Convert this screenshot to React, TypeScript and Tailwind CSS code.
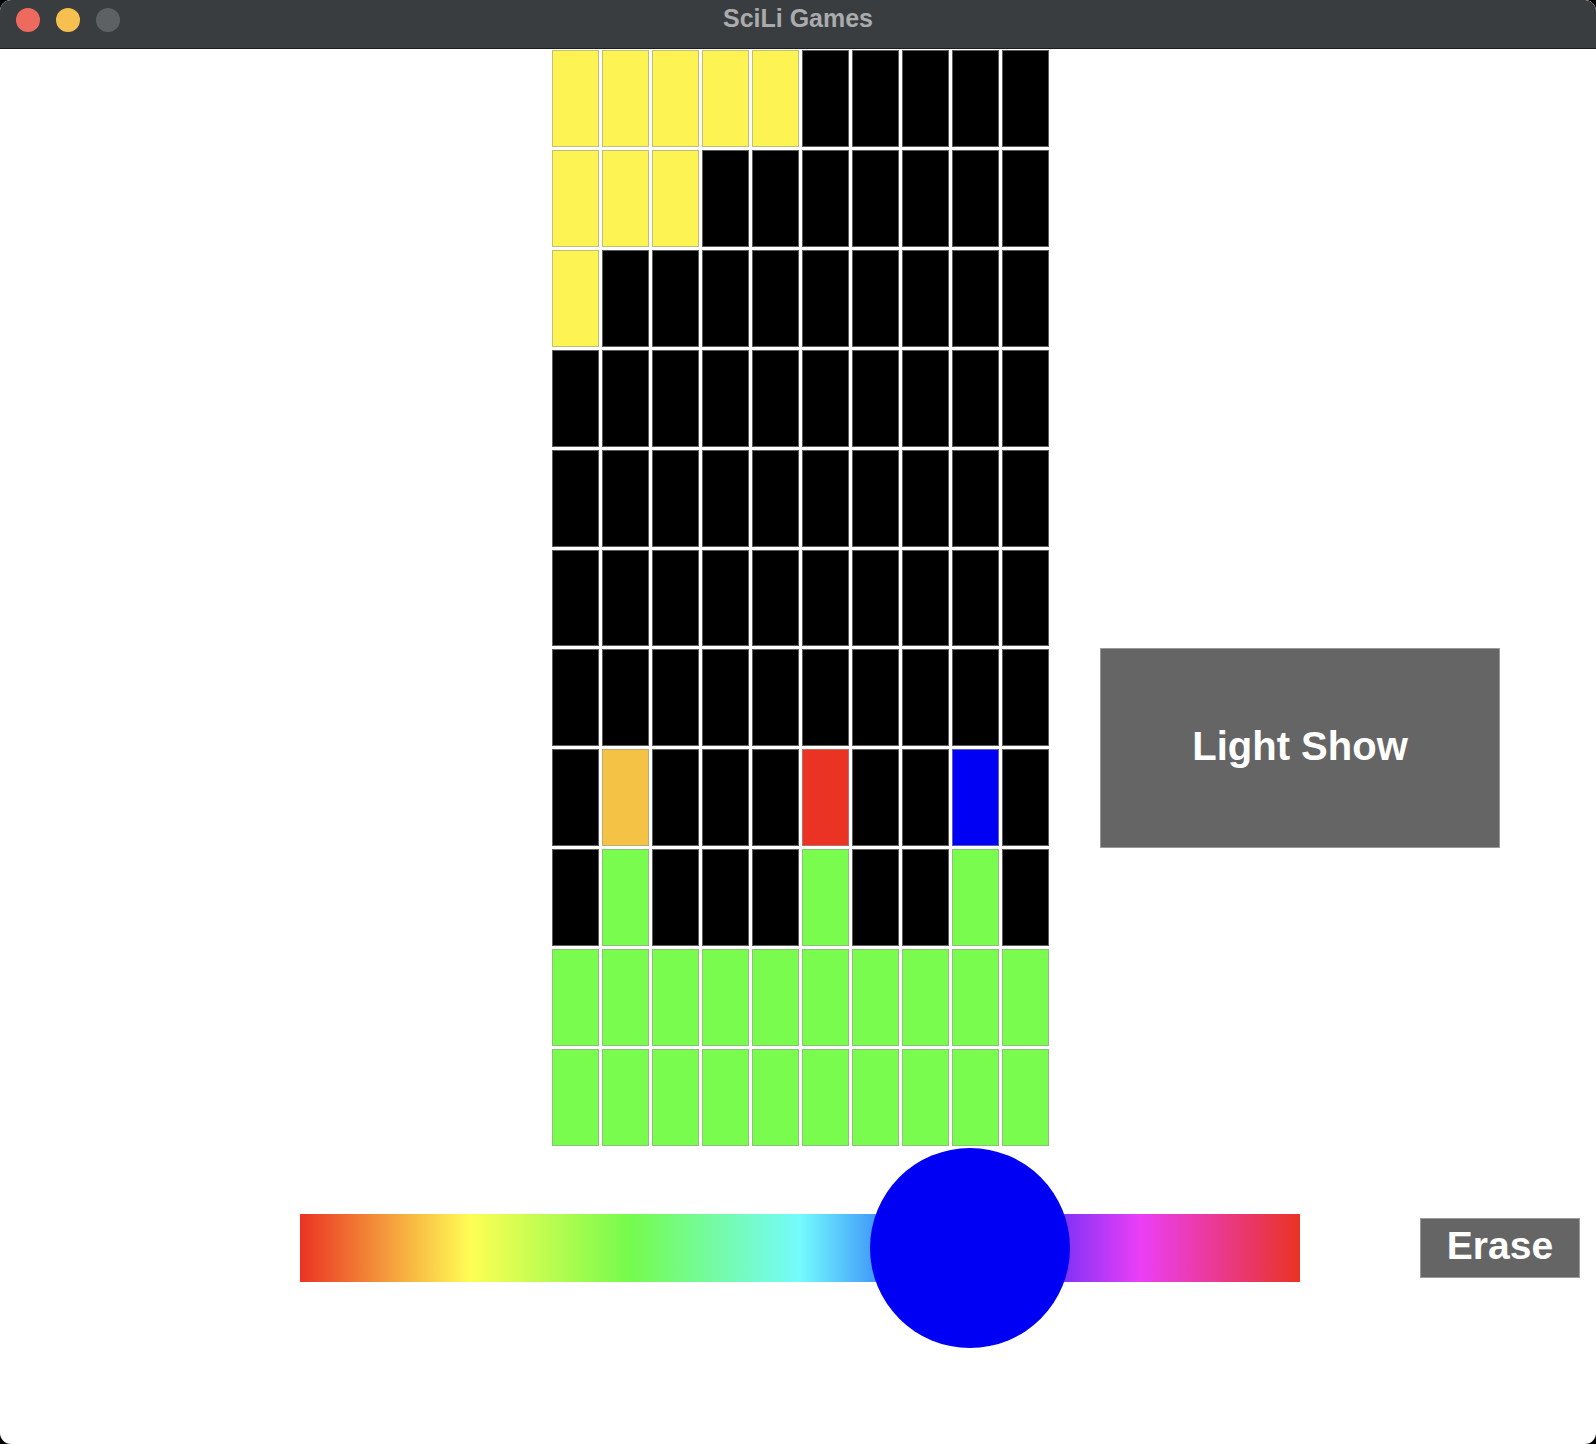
import { useState } from 'react';

const Y = 'bg-[#fdf352]';
const K = 'bg-black';
const G = 'bg-[#7afc4f]';
const O = 'bg-[#f4c345]';
const R = 'bg-[#ea3323]';
const B = 'bg-[#0000f5]';

const rows: string[][] = [
    [Y, Y, Y, Y, Y, K, K, K, K, K],
    [Y, Y, Y, K, K, K, K, K, K, K],
    [Y, K, K, K, K, K, K, K, K, K],
    [K, K, K, K, K, K, K, K, K, K],
    [K, K, K, K, K, K, K, K, K, K],
    [K, K, K, K, K, K, K, K, K, K],
    [K, K, K, K, K, K, K, K, K, K],
    [K, O, K, K, K, R, K, K, B, K],
    [K, G, K, K, K, G, K, K, G, K],
    [G, G, G, G, G, G, G, G, G, G],
    [G, G, G, G, G, G, G, G, G, G],
];

function TitleBar() {
    return (
        <div className="relative h-[49px] bg-[#3a3d40] border-b border-[#1c1d1f] rounded-t-[11px]">
            <div className="flex items-center gap-4 pl-4 pt-2">
                <span className="w-6 h-6 rounded-full bg-[#ee6a5f]" />
                <span className="w-6 h-6 rounded-full bg-[#f5c04f]" />
                <span className="w-6 h-6 rounded-full bg-[#5e6164]" />
            </div>
            <div className="absolute inset-x-0 top-0 h-[38px] flex items-center justify-center pointer-events-none">
                <span className="text-[25px] font-bold text-[#a9abad] font-['Liberation_Sans',Arial,sans-serif]">SciLi Games</span>
            </div>
        </div>
    );
}

function Board() {
    return (
        <div className="grid grid-cols-10 grid-rows-[repeat(11,minmax(0,1fr))] gap-[3px] w-[497px] h-[1096px]">
            {rows.flat().map((c, i) => (
                <div key={i} className={`${c} border border-[#9a9a9a]/60`} />
            ))}
        </div>
    );
}

function HueSlider({ value }: { value: number }) {
    return (
        <div className="relative w-[1000px] h-[200px] flex items-center">
            <div className="w-full h-[68px] bg-[linear-gradient(to_right,#ea3323_0%,#fffe54_17%,#75fb4c_33%,#74fbfd_50%,#0023f5_67%,#ea3ff7_84%,#ea3323_100%)]" />
            <div
                className="absolute top-0 w-[200px] h-[200px] rounded-full bg-[#0000f5]"
                style={{ left: `${value * 1000 - 100}px` }}
            />
        </div>
    );
}

export default function App() {
    const [hue] = useState(0.67);

    return (
        <div className="w-[1596px] h-[1444px] bg-black">
            <div className="w-full h-full bg-white rounded-[11px] overflow-hidden font-['Liberation_Sans',Arial,sans-serif]">
                <TitleBar />
                <div className="flex items-start pl-[552px] pt-[1px] gap-[51px]">
                    <Board />
                    <button className="mt-[598px] w-[400px] h-[200px] pb-[4px] bg-[#656565] text-white font-bold text-[40px] border border-[#bdbdbd]/60">
                        Light Show
                    </button>
                </div>
                <div className="flex items-center pl-[300px] mt-[2px] gap-[120px]">
                    <HueSlider value={hue} />
                    <button className="w-[160px] h-[60px] pb-[5px] bg-[#656565] text-white font-bold text-[39px] border border-[#bdbdbd]/60 leading-none">
                        Erase
                    </button>
                </div>
            </div>
        </div>
    );
}
